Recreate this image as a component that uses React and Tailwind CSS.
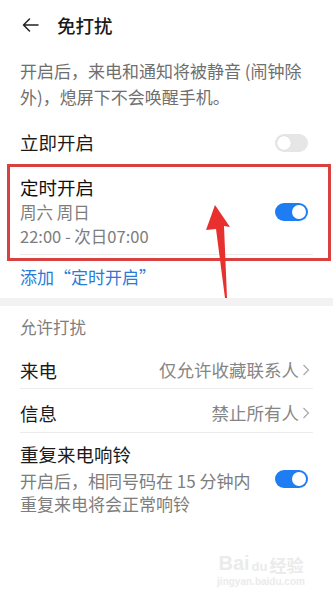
import React from 'react'

const font = { fontFamily: '"Noto Sans CJK SC", "Noto Sans", sans-serif' }

function Toggle({ on }) {
  return on ? (
    <div className="w-[33px] h-[18px] rounded-full bg-[#1f7df3] flex items-center justify-end pr-[2px] shrink-0">
      <div className="w-[14px] h-[14px] rounded-full bg-white" />
    </div>
  ) : (
    <div className="w-[33px] h-[18px] rounded-full bg-[#e6e6e6] flex items-center pl-[2px] shrink-0">
      <div className="w-[14px] h-[14px] rounded-full bg-white shadow-[0_0_1px_rgba(0,0,0,0.2)]" />
    </div>
  )
}

function Chevron() {
  return (
    <svg width="8" height="12" viewBox="0 0 8 12" className="ml-[3px] shrink-0">
      <polyline points="1.5,1 6.5,6 1.5,11" fill="none" stroke="#a8a8a8" strokeWidth="1.2" />
    </svg>
  )
}

export default function App() {
  return (
    <div className="relative w-[333px] h-[610px] bg-white overflow-hidden text-[#1b1b1b]" style={font}>
      {/* header */}
      <div className="h-[50px] flex items-center pl-[22px]">
        <svg width="17" height="14" viewBox="0 0 17 14">
          <path d="M16 7H1.5M7.5 1L1.5 7l6 6" fill="none" stroke="#222" strokeWidth="1.5" strokeLinecap="round" strokeLinejoin="round" />
        </svg>
        <span className="ml-[18px] text-[18.5px] font-medium leading-none">免打扰</span>
      </div>

      {/* description */}
      <div className="mt-[8px] px-5 text-[17px] leading-[26px] text-[#6f6f6f] whitespace-nowrap">
        开启后，来电和通知将被静音 (闹钟除
        <br />
        外)，熄屏下不会唤醒手机。
      </div>

      {/* now */}
      <div className="mt-[11px] h-[44px] pl-5 pr-[25px] flex items-center justify-between">
        <span className="text-[18.5px]">立即开启</span>
        <Toggle on={false} />
      </div>

      {/* schedule */}
      <div className="mx-5 pr-[5px] pt-[10px] pb-[6px] border-b border-[#ececec] flex items-center justify-between">
        <div>
          <div className="text-[18.5px] leading-[24px] text-[#111]">定时开启</div>
          <div className="mt-px text-[16.5px] leading-[24px] text-[#7d7d7d]">周六 周日</div>
          <div className="text-[16.5px] leading-[24px] text-[#7d7d7d]">22:00 - 次日07:00</div>
        </div>
        <Toggle on />
      </div>

      <div className="px-5 pt-[10px] pb-[9px] text-[17px] leading-[24px] text-[#2a7bd6]">
        添加“定时开启”
      </div>

      <div className="h-[8px] bg-[#f2f2f2]" />

      {/* allow */}
      <div className="px-5 pt-[9px] text-[16.5px] leading-[24px] text-[#7d7d7d]">允许打扰</div>

      <div className="mx-5 pr-[3px] pt-[19px] pb-[6px] border-b border-[#ececec] flex items-center justify-between">
        <span className="text-[18.5px] leading-[24px]">来电</span>
        <span className="flex items-center text-[17.5px] leading-[24px] text-[#858585]">
          仅允许收藏联系人
          <Chevron />
        </span>
      </div>

      <div className="mx-5 pr-[3px] pt-[12px] pb-[7px] border-b border-[#ececec] flex items-center justify-between">
        <span className="text-[18.5px] leading-[24px]">信息</span>
        <span className="flex items-center text-[17.5px] leading-[24px] text-[#858585]">
          禁止所有人
          <Chevron />
        </span>
      </div>

      <div className="pl-5 pr-[25px] pt-[9px] flex items-center justify-between">
        <div>
          <div className="text-[18.5px] leading-[24px]">重复来电响铃</div>
          <div className="mt-[3px] text-[17px] leading-[23px] text-[#7d7d7d]">开启后，相同号码在 15 分钟内</div>
          <div className="text-[17px] leading-[23px] text-[#7d7d7d]">重复来电将会正常响铃</div>
        </div>
        <Toggle on />
      </div>

      {/* annotation box */}
      <div className="absolute left-[7px] top-[164px] w-[324px] h-[97px] border-[3px] border-[#d8413f] pointer-events-none" />

      {/* annotation arrow */}
      <svg className="absolute left-0 top-0 pointer-events-none" width="333" height="610" viewBox="0 0 333 610">
        <polygon points="215,205 230,227 224,226 227,298 225,298 216,229 206,230" fill="#e8312e" />
      </svg>

      {/* watermark */}
      <div className="absolute left-[215px] top-[553px] w-[92px] flex flex-col items-center text-[#ebebeb] pointer-events-none">
        <div className="flex items-end leading-none">
          <span className="text-[20px] font-bold" style={{ fontFamily: '"Liberation Sans", sans-serif' }}>Bai</span>
          <span className="text-[13px] font-bold mx-[2px]" style={{ fontFamily: '"Liberation Sans", sans-serif' }}>du</span>
          <span className="text-[17px] font-bold">经验</span>
        </div>
        <div className="mt-[4px] text-[10px] leading-none font-bold" style={{ fontFamily: '"Liberation Sans", sans-serif' }}>jingyan.baidu.com</div>
      </div>
    </div>
  )
}
